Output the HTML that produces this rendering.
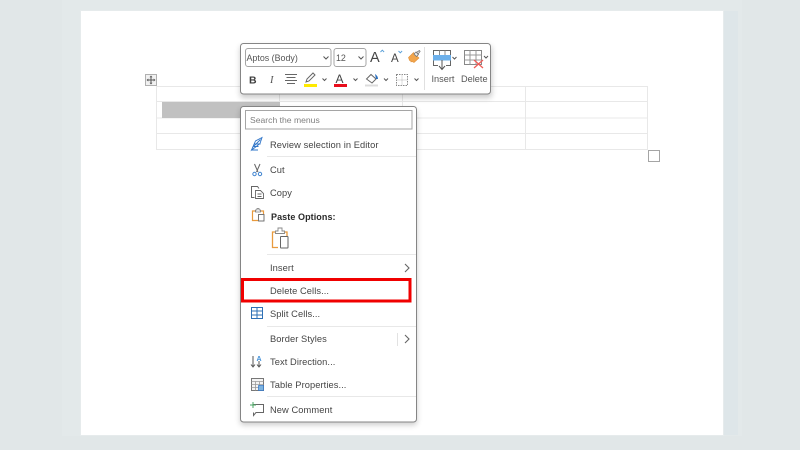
<!DOCTYPE html>
<html><head><meta charset="utf-8"><style>
html,body{margin:0;padding:0;width:800px;height:450px;overflow:hidden;background:#e1e7e8}
svg{display:block;position:absolute;left:0;top:0}
text{font-family:"Liberation Sans",sans-serif;font-size:9.3px;fill:#444}
.m{letter-spacing:.08px}
</style></head><body>
<svg width="800" height="450" viewBox="0 0 800 450" xmlns="http://www.w3.org/2000/svg">
<defs>
<filter id="s" x="-10%" y="-20%" width="120%" height="140%"><feGaussianBlur stdDeviation="3"/></filter>
<filter id="soft" x="0" y="0" width="100%" height="100%"><feGaussianBlur stdDeviation="0.35"/></filter>
</defs>
<g filter="url(#soft)">
<rect width="800" height="450" fill="#e1e7e8"/>
<rect x="62" y="0" width="680" height="436" fill="#e3e9ea"/>
<rect x="723" y="11" width="15" height="424" fill="#dee6e9"/>
<rect x="80" y="10" width="644" height="426" fill="#e6ebec"/>
<rect x="81" y="11" width="642" height="424" fill="#fff"/>

<!-- table -->
<g stroke="#e8e8e8" stroke-width="1" fill="none">
<path d="M156 86.500H648M156 101.500H648M156 118H648M156 133.500H648M156 149.500H648" />
<path d="M156.500 86V150M279.500 86V150M402.500 86V150M525.500 86V150M647.500 86V150"/>
</g>
<rect x="162" y="102" width="118" height="16" fill="#c1c1c1"/>
<rect x="145.500" y="74.500" width="11" height="11" fill="#f1f1f1" stroke="#b0b0b0"/>
<path d="M151 76.500V83.500M147.500 80H154.500" stroke="#555" stroke-width="1"/>
<path d="M151 75.500l-1.500 1.800h3zM151 84.500l-1.500-1.800h3zM146.500 80l1.800-1.500v3zM155.500 80l-1.800-1.500v3z" fill="#555"/>
<rect x="648.500" y="150.500" width="11" height="11" fill="#fff" stroke="#a5a5a5"/>

<!-- shadows -->
<rect x="240" y="46" width="252" height="52" rx="3" fill="#000" opacity=".2" filter="url(#s)"/>
<rect x="240" y="109" width="177" height="316" rx="3" fill="#000" opacity=".2" filter="url(#s)"/>

<!-- toolbar -->
<rect x="240.500" y="43.500" width="250" height="50.500" rx="3" fill="#fff" stroke="#858585"/>
<rect x="245.500" y="48.500" width="85.500" height="18" rx="2.500" fill="#fff" stroke="#a5a5a5"/>
<text x="246.500" y="61" style="font-size:8.900px;fill:#555">Aptos (Body)</text>
<path d="M323.500 56.500l2.500 2.500 2.500-2.500" fill="none" stroke="#555"/>
<rect x="334" y="48.500" width="32" height="18" rx="2.500" fill="#fff" stroke="#a5a5a5"/>
<text x="336" y="61" style="font-size:8.900px;fill:#555">12</text>
<path d="M358.500 56.500l2.500 2.500 2.500-2.500" fill="none" stroke="#555"/>
<text x="370" y="62" style="font-size:14.500px;fill:#444">A</text>
<path d="M380.500 52l1.800-1.800 1.800 1.800" fill="none" stroke="#5aa0d8"/>
<text x="391" y="62" style="font-size:11.500px;fill:#444">A</text>
<path d="M398.500 51l1.800 1.800 1.800-1.800" fill="none" stroke="#5aa0d8"/>
<!-- format painter -->
<path d="M408.500 57.500l5-5 5.500 5.500-5 4.500-2-1-1 .5-.5-1.500-1 0z" fill="#f2a54c" stroke="#e09038" stroke-width=".6"/>
<path d="M414 54l2-2 2.500 2.500-2 2zM416.500 52.500l2.800-2 .8.800-2.200 3z" fill="#eee" stroke="#777" stroke-width=".8"/>
<!-- row 2 -->
<text x="249" y="83.500" style="font-size:10.500px;font-weight:bold;fill:#3a3a3a">B</text>
<text x="270" y="83" style="font-size:10.500px;font-style:italic;font-family:'Liberation Serif',serif;fill:#555">I</text>
<path d="M285 74.500H297M286.500 77.500H295.500M285 80.500H297M287 83.500H295" stroke="#666" stroke-width="1"/>
<path d="M306 82l1-3 6-6 2 2-6 6z" fill="#fff" stroke="#666"/>
<rect x="304" y="84" width="13" height="3" fill="#ffea00"/>
<path d="M322.500 78.500l2 2 2-2" fill="none" stroke="#555"/>
<text x="335.500" y="83" style="font-size:12px;fill:#444">A</text>
<rect x="334" y="84" width="13" height="3" fill="#e8101c"/>
<path d="M353.500 78.500l2 2 2-2" fill="none" stroke="#555"/>
<path d="M366.500 79l4.500-4.500 5 4.500-4 4z" fill="#fff" stroke="#666"/>
<path d="M375 74q3 2 3 5l-2 0z" fill="#2a6fc0"/>
<rect x="365" y="84.500" width="13" height="2" fill="#dcdcdc"/>
<path d="M384 78.500l2 2 2-2" fill="none" stroke="#555"/>
<rect x="396.500" y="74.500" width="11" height="11" fill="none" stroke="#888" stroke-dasharray="1.500 1"/>
<path d="M402 74.500V85.500M396.500 80H407.500" stroke="#bbb" stroke-dasharray="1 1"/>
<path d="M414.500 78.500l2 2 2-2" fill="none" stroke="#555"/>
<path d="M424.500 47V90" stroke="#e0e0e0"/>
<!-- insert -->
<path d="M438 65.500H433.500V50.500H450.500V65.500H446" fill="#fff" stroke="#666"/>
<rect x="433" y="55" width="18" height="5.500" fill="#6db0ea"/>
<path d="M439.500 50.500V55M445 50.500V55" stroke="#888"/>
<path d="M442 60V69M439 66l3 3.500 3-3.500" fill="none" stroke="#555"/>
<path d="M452.500 57l2 2 2-2" fill="none" stroke="#555"/>
<text x="431.500" y="82" style="font-size:9.200px;fill:#555">Insert</text>
<!-- delete -->
<rect x="464.500" y="50.500" width="17" height="14" fill="#fff" stroke="#888"/>
<path d="M470 50.500V64.500M476 50.500V64.500M464.500 55H481.500M464.500 60H481.500" stroke="#999"/>
<path d="M474 60l9 8M483 60l-9 8" stroke="#ef5d58" stroke-width="1.300"/>
<path d="M484 56l2 2 2-2" fill="none" stroke="#555"/>
<text x="461" y="82" style="font-size:9.200px;fill:#555">Delete</text>

<!-- menu -->
<rect x="240.500" y="106.500" width="176" height="315.500" rx="3" fill="#fff" stroke="#858585"/>
<rect x="245.500" y="110.500" width="166.500" height="18.500" fill="#fff" stroke="#a5a5a5"/>
<text x="250" y="123" style="font-size:8.600px;fill:#808080">Search the menus</text>

<g class="m">
<text x="270" y="148">Review selection in Editor</text>
<text x="270" y="173">Cut</text>
<text x="270" y="196">Copy</text>
<text x="271" y="220" style="font-weight:bold;font-size:9px;fill:#2a2a2a">Paste Options:</text>
<text x="270" y="271">Insert</text>
<text x="270" y="294">Delete Cells...</text>
<text x="270" y="317">Split Cells...</text>
<text x="270" y="342">Border Styles</text>
<text x="270" y="365">Text Direction...</text>
<text x="270" y="388">Table Properties...</text>
<text x="270" y="413">New Comment</text>
</g>
<path d="M267 156.500H416M267 254.500H416M267 326.500H416M267 396.500H416" stroke="#e8e8e8"/>
<path d="M405 264l4 4-4 4" fill="none" stroke="#666" stroke-width="1.100"/>
<path d="M397.500 333V346" stroke="#e2e2e2"/>
<path d="M405 335l4 4-4 4" fill="none" stroke="#666" stroke-width="1.100"/>

<!-- highlight box -->
<rect x="242.500" y="279.500" width="167.500" height="21.500" fill="none" stroke="#f00000" stroke-width="3"/>

<!-- icons -->
<g stroke="#2f74c8" fill="none" stroke-width=".9">
<path d="M251 150H258M251.500 150l4-9 6.500-3.500-2 6-5 4z"/>
<path d="M252.500 147.500l8-8M254.500 144H260.500M254 146.500H258.500"/>
</g>
<path d="M254.500 164l3.500 8M260 164l-3.500 8" stroke="#666" stroke-width="1" fill="none"/>
<circle cx="254.500" cy="174" r="1.700" fill="none" stroke="#3f84d0"/>
<circle cx="260" cy="174" r="1.700" fill="none" stroke="#3f84d0"/>
<path d="M254.500 197.500H251.500V186.500H257.500L259 188.500" fill="none" stroke="#666"/>
<path d="M255.500 190.500H260.500L263.500 193.500V198.500H255.500ZM257.500 194H261.500M257.500 196.500H261.500" fill="#fff" stroke="#666" stroke-width=".9"/>
<!-- paste small -->
<path d="M256 211H252.500V220.500H258" fill="none" stroke="#e89a3c" stroke-width="1.200"/>
<path d="M260 211H263.500V214" fill="none" stroke="#e89a3c" stroke-width="1.200"/>
<path d="M255.500 212V210H257V208.500H259V210H260.500V212Z" fill="#fff" stroke="#777" stroke-width=".8"/>
<rect x="258.500" y="214.500" width="5.500" height="6.500" fill="#fff" stroke="#666" stroke-width=".9"/>
<!-- paste big -->
<path d="M276 232H272.500V247.500H278" fill="none" stroke="#e89a3c" stroke-width="1.300"/>
<path d="M284 232H287V236" fill="none" stroke="#e89a3c" stroke-width="1.300"/>
<path d="M275.500 233.500V231H278V228H282V231H284.500V233.500Z" fill="#fff" stroke="#888" stroke-width=".9"/>
<rect x="280.500" y="236.500" width="7.500" height="11.500" rx=".5" fill="#fff" stroke="#666"/>
<!-- split cells -->
<rect x="251.500" y="307.500" width="11" height="11" fill="#fff" stroke="#2f6fb5"/>
<path d="M251.500 311H262.500M251.500 315H262.500M257 307.500V318.500" stroke="#2f6fb5"/>
<!-- text direction -->
<path d="M253 356V367M251 364.500l2 2.500 2-2.500M259 361V367M257 364.500l2 2.500 2-2.500" fill="none" stroke="#555" stroke-width="1"/>
<text x="256.500" y="361" style="font-size:7px;fill:#3f8fd8;font-weight:bold">A</text>
<!-- table props -->
<rect x="251.500" y="378.500" width="12" height="12" fill="#f4f4f4" stroke="#777"/>
<path d="M251.500 381.500H263.500M251.500 384.500H263.500M251.500 387.500H263.500M255.500 381.500V390.500M259.500 381.500V390.500" stroke="#999" stroke-width=".8"/>
<rect x="258.500" y="385.500" width="5" height="5" fill="#7db4e0" stroke="#2f74c8" stroke-width=".7"/>
<!-- comment -->
<path d="M253.500 404.500H263.500V412.500H256L253.500 415.500V412.500" fill="none" stroke="#666"/>
<path d="M253 402V408M250 405H256" stroke="#4aa564" stroke-width="1"/>
</g>
</svg>
</body></html>
